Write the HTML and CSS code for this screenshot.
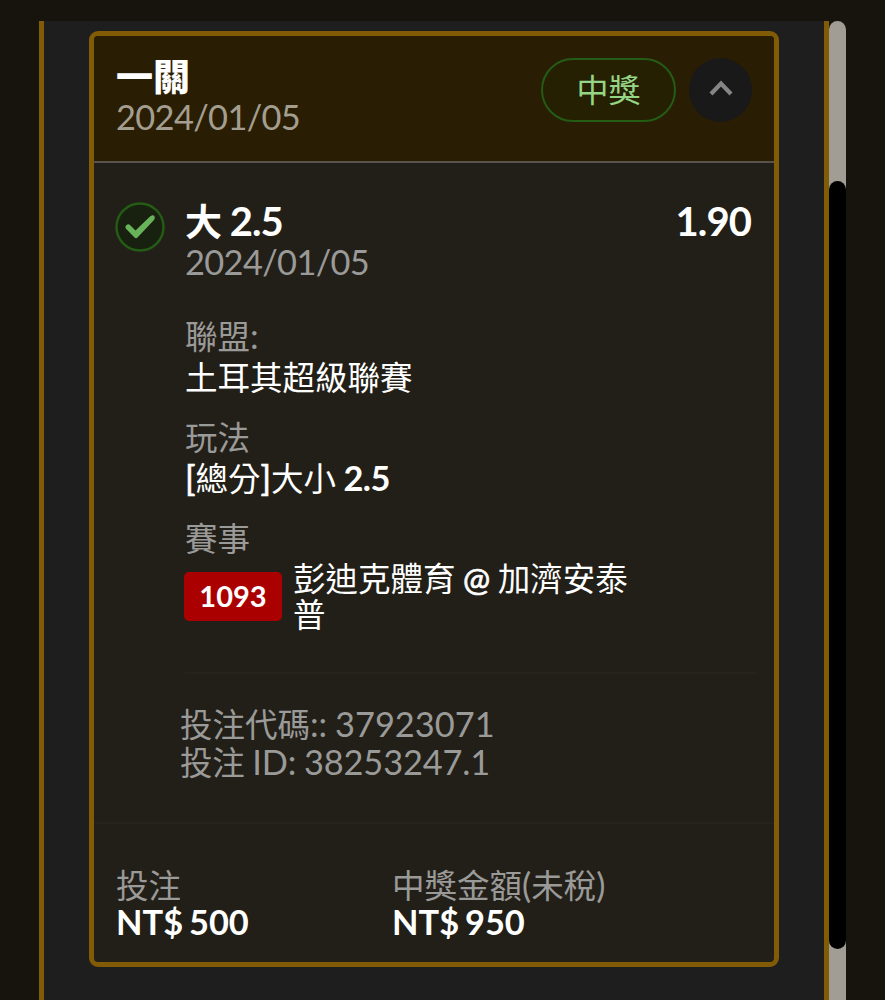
FILE: index.html
```
<!DOCTYPE html>
<html lang="zh-Hant">
<head>
  <meta charset="UTF-8" />
  <meta name="viewport" content="width=device-width, initial-scale=1" />
  <title>投注紀錄</title>
  <link rel="stylesheet" href="styles.css">
</head>
<body>
  <div class="page">
    <div class="panel">
      <div class="card">
        <div class="card-header">
          <div>
            <h1 class="title">一關</h1>
            <div class="date">2024/01/05</div>
          </div>
          <div class="header-actions">
            <span class="badge">中獎</span>
            <button class="toggle" aria-label="收合">
              <svg width="24" height="16" viewBox="0 0 24 16"><path d="M2 14 L12 3.5 L22 14" fill="none" stroke="#858585" stroke-width="4.2"/></svg>
            </button>
          </div>
        </div>

        <div class="bet">
          <svg class="check" width="50" height="50" viewBox="0 0 50 50">
            <circle cx="25" cy="25" r="23.5" fill="#182010" stroke="#245c15" stroke-width="2.4"/>
            <path d="M10.8 26.5 Q9.5 24.5 11.5 23 Q13.5 21.5 15.5 23.5 L20.5 28.5 L35 14.5 Q39.5 11.5 39.8 15.5 Q40 17 38.5 18.5 L22.5 35.5 Q21 37 19.5 35.5 Z" fill="#68b25a"/>
          </svg>
          <div class="bet-info">
            <div class="pick-row">
              <h2 class="pick"><span class="zh">大</span> 2.5</h2>
              <span class="odds">1.90</span>
            </div>
            <div class="date pick-date">2024/01/05</div>

            <div class="field">
              <div class="label"><span class="zh">聯盟</span>:</div>
              <div class="value"><span class="zh">土耳其超級聯賽</span></div>
            </div>
            <div class="field">
              <div class="label"><span class="zh">玩法</span></div>
              <div class="value"><span class="medium">[</span><span class="zh">總分</span><span class="medium">]</span><span class="zh">大小</span> <b>2.5</b></div>
            </div>
            <div class="field">
              <div class="label"><span class="zh">賽事</span></div>
              <div class="match">
                <span class="match-no">1093</span>
                <div class="teams">彭迪克體育 <span class="medium">@</span> 加濟安泰普</div>
              </div>
            </div>

            <div class="codes">
              <div><span class="zh">投注代碼</span>:: 37923071</div>
              <div class="bet-id"><span class="zh">投注</span> ID: 38253247.1</div>
            </div>
          </div>
        </div>

        <div class="card-footer">
          <div class="amount">
            <div class="label"><span class="zh">投注</span></div>
            <div class="money">NT$ 500</div>
          </div>
          <div class="amount">
            <div class="label"><span class="zh">中獎金額</span>(<span class="zh">未稅</span>)</div>
            <div class="money">NT$ 950</div>
          </div>
        </div>
      </div>
    </div>
    <div class="scrollbar"><div class="thumb"></div></div>
  </div>
</body>
</html>
```
FILE: styles.css
```
* {
  box-sizing: border-box;
}
body {
  margin: 0;
  height: 1000px;
  overflow: hidden;
  background: #17140d;
  color: #fff;
  font-family: Lato, "Noto Sans CJK TC", sans-serif;
  font-size: 34.4px;
}
h1, h2 {
  margin: 0;
}
.zh {
  font-size: 32.5px;
}
.page {
  display: flex;
  height: 1000px;
  padding: 21px 0 0 39px;
}
.panel {
  width: 790px;
  padding: 10px 45px 0;
  background: #1e1e1e;
  border: solid #825b06;
  border-width: 0 5px;
}
.card {
  height: 936px;
  background: #221f18;
  border: 5px solid #825b06;
  border-radius: 9px;
  overflow: hidden;
}
.card-header {
  display: flex;
  justify-content: space-between;
  height: 127px;
  padding: 22px 22px 0;
  background: #291e03;
  border-bottom: 2px solid #57534c;
}
.title {
  height: 39px;
  font-size: 37px;
  font-weight: 900;
  line-height: 37px;
}
.date {
  height: 41px;
  line-height: 41px;
  letter-spacing: -0.65px;
  color: #9a9a98;
}
.card-header .date {
  height: 39px;
  line-height: 39px;
  color: #a49e90;
}
.header-actions {
  display: flex;
  gap: 13px;
}
.badge {
  width: 135px;
  height: 64px;
  border: 2.5px solid #245c15;
  border-radius: 32px;
  background: #262002;
  color: #95d586;
  font-size: 32px;
  line-height: 60px;
  text-align: center;
}
.toggle {
  display: flex;
  align-items: center;
  justify-content: center;
  width: 63px;
  height: 64px;
  padding: 0;
  border: none;
  border-radius: 50%;
  background: #191919;
}
.toggle svg {
  margin-bottom: 4px;
}
.bet {
  display: flex;
  gap: 20px;
  height: 661px;
  padding: 38px 17px 0 21px;
  border-bottom: 2px solid #26231d;
}
.check {
  flex: none;
  margin-top: 1px;
}
.bet-info {
  flex: 1;
}
.pick-row {
  display: flex;
  justify-content: space-between;
  height: 40px;
  padding-right: 6px;
  font-size: 40px;
  font-weight: bold;
  line-height: 41px;
}
.pick {
  font-size: 40px;
  letter-spacing: -1px;
}
.pick .zh {
  font-size: 37px;
}
.odds {
  letter-spacing: -0.9px;
}
.pick-date {
  margin-bottom: 33px;
}
.field {
  margin-bottom: 19px;
}
.label {
  height: 41px;
  line-height: 41px;
  color: #9a9a98;
}
.value {
  height: 41px;
  line-height: 41px;
  word-spacing: -1.5px;
}
.value b {
  letter-spacing: -0.5px;
}
.medium {
  -webkit-text-stroke: 0.7px #fff;
}
.match {
  display: flex;
  align-items: center;
  gap: 11px;
  height: 76px;
  margin-left: -1px;
}
.match-no {
  width: 98px;
  height: 49px;
  border-radius: 5px;
  background: #ab0000;
  font-size: 29px;
  font-weight: bold;
  line-height: 48px;
  text-align: center;
}
.teams {
  width: 345px;
  padding-top: 2px;
  font-size: 32.5px;
  line-height: 36px;
  word-spacing: -0.8px;
}
.codes {
  margin-top: 38px;
  padding-top: 31px;
  border-top: 2px solid #26231d;
  color: #9a9a98;
  line-height: 37px;
}
.codes div {
  margin-left: -5px;
  word-spacing: -1px;
}
.bet-id {
  letter-spacing: -0.15px;
}
.card-footer {
  display: grid;
  grid-template-columns: 276px 1fr;
  padding: 40px 22px 0;
}
.money {
  height: 34px;
  font-weight: bold;
  line-height: 34px;
  word-spacing: -2.5px;
}
.scrollbar {
  width: 17px;
  padding-top: 160px;
  background: #a19d94;
  border-radius: 9px 9px 0 0;
}
.thumb {
  height: 768px;
  background: #000;
  border-radius: 9px;
}
```
